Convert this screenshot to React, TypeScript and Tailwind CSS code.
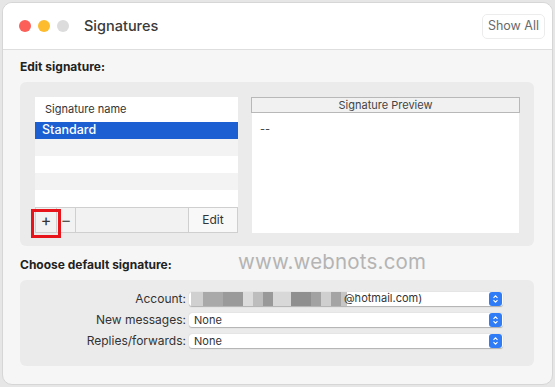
function Light({ color }: { color: string }) {
  return <span className={`block h-[12px] w-[12px] rounded-full ${color}`} />;
}

function Stepper() {
  return (
    <span className="flex h-[14px] w-[13px] items-center justify-center rounded-[3px] bg-[#2f7cf6]">
      <svg width="7" height="10" viewBox="0 0 7 10" fill="none">
        <path d="M1.5 3.8 L3.5 1.8 L5.5 3.8" stroke="white" strokeWidth="1.1" />
        <path d="M1.5 6.2 L3.5 8.2 L5.5 6.2" stroke="white" strokeWidth="1.1" />
      </svg>
    </span>
  );
}

function Popup({ children }: { children: React.ReactNode }) {
  return (
    <div className="flex h-[14px] w-[314px] items-center justify-between rounded-[3px] bg-white pr-[1px] shadow-[0_0.5px_1px_rgba(0,0,0,0.25)]">
      <div className="flex h-full min-w-0 flex-1 items-center">{children}</div>
      <Stepper />
    </div>
  );
}

const blur = [
  "bg-[#d0d0d0] w-[12px]",
  "bg-[#a9a9a9] w-[20px]",
  "bg-[#9a9a9a] w-[20px]",
  "bg-[#dcdcdc] w-[10px]",
  "bg-[#bdbdbd] w-[10px]",
  "bg-[#999] w-[10px]",
  "bg-[#d8d8d8] w-[18px]",
  "bg-[#8f8f8f] w-[20px]",
  "bg-[#a2a2a2] w-[10px]",
  "bg-[#cfcfcf] w-[10px]",
  "bg-[#a4a4a4] w-[10px]",
  "bg-[#c6c6c6] w-[6px]",
];

function Row({ label, children }: { label: string; children: React.ReactNode }) {
  return (
    <div className="flex h-[14px] items-center">
      <span className="w-[166px] text-right text-[12px] leading-[14px] text-[#333]">{label}</span>
      <span className="w-[3px]" />
      <Popup>{children}</Popup>
    </div>
  );
}

export default function App() {
  return (
    <div
      className="relative h-[387px] w-[555px] bg-[#e6e6e6] p-[2px] text-[#262626]"
      style={{ fontFamily: "Inter, 'Noto Sans', sans-serif" }}
    >
      <div className="flex h-[383px] w-[551px] flex-col overflow-hidden rounded-[10px] border border-[#d6d6d6] bg-[#f6f6f6]">
        {/* title bar */}
        <div className="flex h-[47px] shrink-0 items-center border-b border-[#dedede] bg-white pl-[16px] pr-[7px]">
          <div className="flex items-center gap-[7px]">
            <Light color="bg-[#fc5f57]" />
            <Light color="bg-[#fdbb2e]" />
            <Light color="bg-[#dcdcdc]" />
          </div>
          <span className="ml-[15px] text-[14.5px] font-medium text-[#3a3a3a]">Signatures</span>
          <button className="ml-auto h-[25px] w-[63px] rounded-[5px] border border-[#ececec] text-[12.5px] text-[#6a6a6a]">
            Show All
          </button>
        </div>

        {/* body */}
        <div className="flex flex-col px-[17px] pt-[9px]">
          <div className="text-[12px] font-bold leading-[15px] text-[#222]">Edit signature:</div>

          <div className="mt-[8px] flex h-[164px] w-[514px] gap-[13px] rounded-[6px] bg-[#ebebeb] pl-[15px] pr-[14px] pt-[15px]">
            {/* list */}
            <div className="flex w-[203px] flex-col">
              <div className="flex h-[25px] items-center bg-white pl-[10px] text-[11px] text-[#333]">
                Signature name
              </div>
              <div className="flex h-[17px] items-center bg-[#1b5fd3] pl-[7px] text-[12.5px] font-medium text-white">
                Standard
              </div>
              <div className="h-[17px] bg-[#f3f3f3]" />
              <div className="h-[17px] bg-white" />
              <div className="h-[17px] bg-[#f3f3f3]" />
              <div className="h-[17px] bg-white" />
              <div className="flex h-[26px] border border-[#cfcfcf] bg-[#f2f2f2]">
                <div className="relative flex w-[21px] items-center justify-center border-r border-[#cfcfcf] text-[16px] text-[#333]">
                  +
                  <span className="absolute left-[-5px] top-[1px] h-[29px] w-[30px] border-[3px] border-[#e8141b]" />
                </div>
                <div className="flex w-[19px] items-center justify-center border-r border-[#cfcfcf] text-[16px] text-[#555]">
                  −
                </div>
                <div className="flex-1" />
                <button className="w-[49px] border-l border-[#cfcfcf] bg-[#f8f8f8] text-[12px] text-[#333]">
                  Edit
                </button>
              </div>
            </div>

            {/* preview */}
            <div className="flex w-[269px] flex-col">
              <div className="flex h-[16px] items-center justify-center border border-[#b8b8b8] bg-[#f1f1f1] text-[11px] text-[#444]">
                Signature Preview
              </div>
              <div className="mx-[1px] h-[120px] bg-white pl-[8px] pt-[8px] text-[11px] text-[#444]">--</div>
            </div>
          </div>

          <div className="mt-[11px] text-[12px] font-bold leading-[15px] text-[#222]">Choose default signature:</div>

          <div className="mt-[8px] flex h-[86px] w-[514px] flex-col gap-[7px] rounded-[6px] bg-[#ebebeb] pt-[12px]">
            <Row label="Account:">
              <div className="flex h-full pl-[2px]">
                {blur.map((b, i) => (
                  <span key={i} className={`h-full ${b}`} />
                ))}
              </div>
              <div className="h-full flex-1 bg-white" />
            </Row>
            <Row label="New messages:">
              <span className="pl-[5px] text-[11px] leading-[14px] text-[#333]">None</span>
            </Row>
            <Row label="Replies/forwards:">
              <span className="pl-[5px] text-[11px] leading-[14px] text-[#333]">None</span>
            </Row>
          </div>
        </div>
      </div>

      {/* overlays: watermark and account domain */}
      <div className="absolute left-[238px] top-[249px] text-[20.5px] leading-[26px] tracking-[0.2px] text-[#b4b4b4]">
        www.webnots.com
      </div>
      <div className="absolute left-[344px] top-[291px] text-[11px] leading-[15px] text-[#333]">@hotmail.com)</div>
    </div>
  );
}
